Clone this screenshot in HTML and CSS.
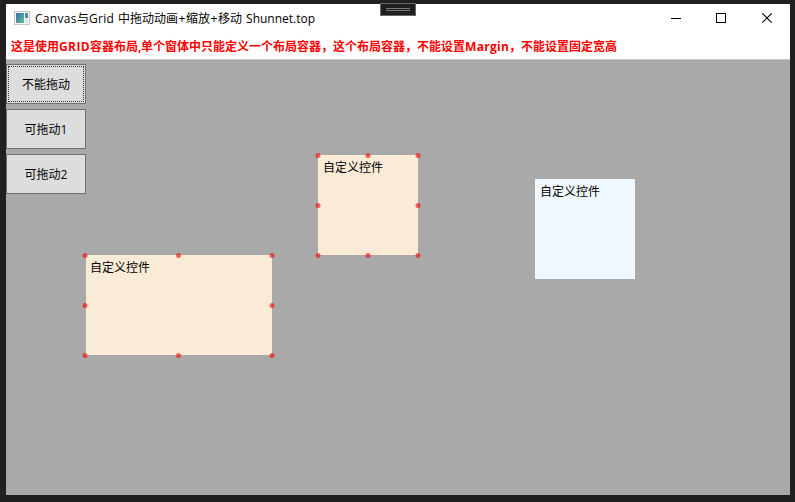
FILE: index.html
```html
<!DOCTYPE html>
<html lang="zh-CN">
<head>
<meta charset="utf-8">
<title>Canvas与Grid 中拖动动画+缩放+移动 Shunnet.top</title>
<link rel="stylesheet" href="styles.css">
</head>
<body>
<div class="debug-grip"><i></i><i></i></div>
<main class="window">
  <header class="titlebar">
    <svg class="app-icon" width="16" height="14" viewBox="0 0 16 14">
      <defs>
        <linearGradient id="g" x1="0" y1="0" x2="1" y2="1"><stop offset="0" stop-color="#3a6fb0"/><stop offset="1" stop-color="#62c088"/></linearGradient>
      </defs>
      <rect x=".5" y=".5" width="15" height="13" fill="#f4f6f7" stroke="#c3c7cb"/>
      <rect x="2" y="2" width="8" height="10" fill="url(#g)"/>
      <rect x="11" y="2" width="3" height="5" fill="#4b8fa0"/>
      <rect x="11" y="8" width="3" height="4" fill="#dfe3e6"/>
    </svg>
    <h1 class="title"><span class="latin-canvas">Canvas</span>与<span class="latin-grid">Grid</span><span class="latin-gap"> </span>中拖动动画<span class="plus">+</span>缩放<span class="plus">+</span>移动<span class="latin-gap"> </span><span class="latin-site">Shunnet.top</span></h1>
    <svg class="controls" width="104" height="12" viewBox="0 0 104 12">
      <path d="M0 5.5h10M45.500 .5h9v9h-9z" fill="none" stroke="#000" shape-rendering="crispEdges"/>
      <path d="M91.300 .3l9.400 9.400M100.700 .3l-9.400 9.400" fill="none" stroke="#000" stroke-width="1.100"/>
    </svg>
  </header>
  <p class="notice">这是使用<span class="bold-grid">GRID</span>容器布局<span class="comma">,</span>单个窗体中只能定义一个布局容器，这个布局容器，不能设置<span class="bold-margin">Margin</span>，不能设置固定宽高</p>
  <section class="stage">
    <nav class="buttons">
      <button class="btn focused">不能拖动</button>
      <button class="btn">可拖动1</button>
      <button class="btn">可拖动2</button>
    </nav>
    <div class="control wide">自定义控件
      <b class="dot l t"></b><b class="dot c t"></b><b class="dot r t"></b><b class="dot l m"></b><b class="dot r m"></b><b class="dot l b"></b><b class="dot c b"></b><b class="dot r b"></b>
    </div>
    <div class="control square">自定义控件
      <b class="dot l t"></b><b class="dot c t"></b><b class="dot r t"></b><b class="dot l m"></b><b class="dot r m"></b><b class="dot l b"></b><b class="dot c b"></b><b class="dot r b"></b>
    </div>
    <div class="control blue">自定义控件</div>
  </section>
</main>
</body>
</html>
```
FILE: styles.css
```css
* { box-sizing: border-box; }
body {
  margin: 0;
  height: 502px;
  padding: 4px 5px 7px 6px;
  background: #202020;
  color: #000;
  font: 12px/16px "Open Sans", "Noto Sans CJK SC", sans-serif;
  overflow: hidden;
}
.window { display: flex; flex-direction: column; height: 491px; background: #fff; }
.debug-grip {
  position: absolute; left: 380px; top: 3px; width: 36px; height: 13px;
  display: flex; flex-direction: column; gap: 1px; padding: 4px 5px;
  background: #202020; border: 1px solid #686868;
}
.debug-grip i { height: 1px; background: #777; }
.titlebar { display: flex; align-items: center; height: 30px; padding: 0 15px 0 8px; }
.app-icon { margin-top: -2px; }
.title { margin: 0 0 0 5px; font-size: 12px; font-weight: 400; white-space: nowrap; display: flex; }
.title span { display: block; }
.latin-canvas { width: 42px; letter-spacing: .3px; }
.latin-grid { width: 25px; letter-spacing: .3px; }
.latin-gap { width: 4px; }
.plus { width: 8px; text-align: center; }
.latin-site { width: 70px; letter-spacing: 0; }
.controls { margin-left: auto; }
.notice {
  display: flex; height: 25px; margin: 0; padding: 5px 0 0 5px;
  color: #f00; font-weight: 700; white-space: nowrap;
}
.bold-grid { width: 31px; letter-spacing: .4px; }
.comma { width: 3px; }
.bold-margin { width: 44px; letter-spacing: .3px; }
.stage { position: relative; flex: 1; background: #a9a9a9; border-top: 1px solid #c8c8c8; }
.buttons { display: flex; flex-direction: column; gap: 5px; width: 80px; padding-top: 4px; }
.btn {
  height: 40px; padding: 2px 0 0; border: 1px solid #707070; border-radius: 0;
  background: #ddd; color: #000; font: inherit;
}
.focused { outline: 1px dotted #333; outline-offset: -3px; }
.control { position: absolute; height: 100px; padding: 5px; background: #faebd7; line-height: 16px; }
.wide { left: 80px; top: 195px; width: 186px; padding-left: 4px; }
.square { left: 312px; top: 95px; width: 100px; }
.blue { left: 529px; top: 119px; width: 100px; background: #f0f8ff; }
.dot {
  position: absolute; width: 5px; height: 5px; border-radius: 50%;
  background: rgba(255, 0, 0, .6); transform: translateX(.5px);
}
.l { left: -3px; }
.c { left: calc(50% - 3px); }
.r { right: -2px; }
.t { top: -2px; }
.m { top: calc(50% - 2px); }
.b { bottom: -3px; }
.wide .l { left: -4px; }
.wide .c { transform: none; }
```
